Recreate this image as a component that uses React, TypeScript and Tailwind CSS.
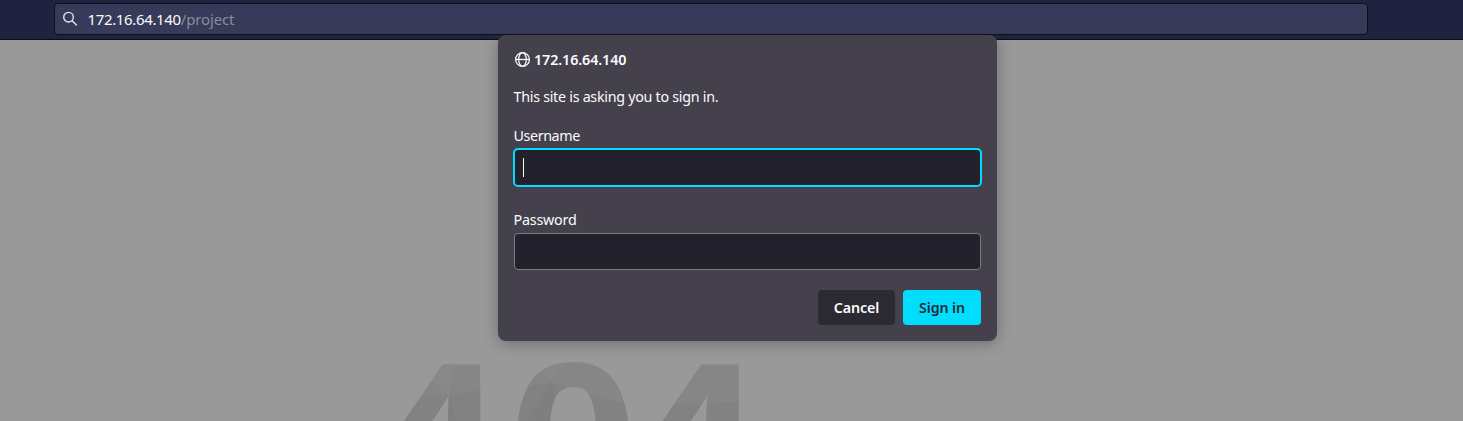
import React from 'react';

function SearchIcon() {
  return (
    <svg className="h-4 w-4 shrink-0" viewBox="0 0 16 16" fill="none" stroke="#e6e6ec" strokeWidth="1.4" strokeLinecap="round">
      <circle cx="6.5" cy="6.2" r="4.8" />
      <path d="M10.1 9.8l4.4 4.2" />
    </svg>
  );
}

function GlobeIcon() {
  return (
    <svg className="h-4 w-4 shrink-0" viewBox="0 0 16 16" fill="none" stroke="#fbfbfe" strokeWidth="1.25">
      <circle cx="8.5" cy="7.5" r="6.9" />
      <ellipse cx="8.5" cy="7.5" rx="3.8" ry="6.9" />
      <path d="M1.6 7.5h13.8" />
    </svg>
  );
}

function ErrorCode() {
  return (
    <svg
      className="ml-[374px] h-[62px] w-[400px] shrink-0 overflow-hidden"
      viewBox="0 0 400 62"
      fontFamily="Liberation Sans, sans-serif"
      fontWeight="700"
      fontSize="236"
    >
      <defs>
        <clipPath id="digits">
          <text transform="translate(-6.4 168) scale(1.04 1)">4</text>
          <text transform="translate(133.5 168)">0</text>
          <text transform="translate(252.1 168) scale(1.04 1)">4</text>
        </clipPath>
      </defs>
      <g fill="#868687">
        <text transform="translate(-6.4 168) scale(1.04 1)">4</text>
        <text transform="translate(133.5 168)">0</text>
        <text transform="translate(252.1 168) scale(1.04 1)">4</text>
      </g>
      <g clipPath="url(#digits)">
        <path d="M82 0L74 36L58 21L40 0Z" fill="#89898a" />
        <path d="M20 40L46 39L74 36L110 31V62H0V40Z" fill="#828283" />
        <path d="M74 36L82 62H74Z" fill="#7f7f80" />
        <path d="M140 0H188L177 23L168 12Z" fill="#888889" />
        <path d="M168 12L177 23L154 26L140 30V0Z" fill="#858586" />
        <path d="M140 29L177 23L216 36L255 46V62H140Z" fill="#828283" />
        <path d="M177 23L154 62H190Z" fill="#7f7f80" />
        <path d="M270 46L370 43V62H270Z" fill="#828283" />
      </g>
    </svg>
  );
}

export default function App() {
  return (
    <div className="relative flex h-[421px] w-[1463px] flex-col overflow-hidden bg-[#99999a] font-['Noto_Sans',sans-serif] text-[14.3px] text-[#fbfbfe]">
      <header className="flex h-10 shrink-0 items-start border-b border-[#0c0c14] bg-[#1f2340] pt-[3px] pl-[54px]">
        <div className="flex h-8 w-[1314px] items-center rounded-[4px] border border-[#0d0e17] bg-[#373a59] pl-[7px]">
          <SearchIcon />
          <div className="ml-[9.5px] pb-px text-[15px] leading-5 tracking-[-0.35px]">172.16.64.140<span className="tracking-[-0.15px] text-[#8b8c9c]">/project</span></div>
        </div>
      </header>
      <main className="flex flex-1 flex-col justify-end">
        <ErrorCode />
      </main>
      <form className="absolute top-[35px] left-[498px] flex h-[306px] w-[499px] flex-col rounded-lg bg-[#44414d] px-4 pt-[15px] shadow-[0_2px_14px_rgba(58,57,68,0.45)]" onSubmit={(e) => e.preventDefault()}>
        <div className="flex h-5 items-center gap-1 font-semibold tracking-[-0.1px]"><GlobeIcon />172.16.64.140</div>
        <p className="mt-[17px] -ml-[0.5px] h-5 leading-5 tracking-[-0.28px]">This site is asking you to sign in.</p>
        <label htmlFor="user" className="mt-[19px] -ml-[0.5px] h-5 leading-5 tracking-[-0.4px]">Username</label>
        <div className="-mx-px mt-[2px] flex h-[39px] shrink-0 items-center rounded-[5px] border-2 border-[#00ddff] bg-[#23212b] pl-2">
          <span className="h-[19px] w-px bg-[#fbfbfe]" />
          <input id="user" className="h-full flex-1 bg-transparent outline-none" />
        </div>
        <label htmlFor="pass" className="mt-[23px] -ml-[0.5px] h-5 leading-5 tracking-[-0.2px]">Password</label>
        <input id="pass" type="password" className="mt-[3px] h-[37px] w-full shrink-0 rounded-[4px] border border-[#7c7a83] bg-[#23212b] outline-none" />
        <div className="mt-5 flex justify-end gap-2 font-semibold">
          <button type="button" className="h-[35px] w-[77px] rounded-[4px] bg-[#2b2a33] tracking-[-0.1px]">Cancel</button>
          <button type="submit" className="h-[35px] w-[78px] rounded-[4px] bg-[#00ddff] tracking-[-0.15px] text-[#2b2a33]">Sign in</button>
        </div>
      </form>
    </div>
  );
}
